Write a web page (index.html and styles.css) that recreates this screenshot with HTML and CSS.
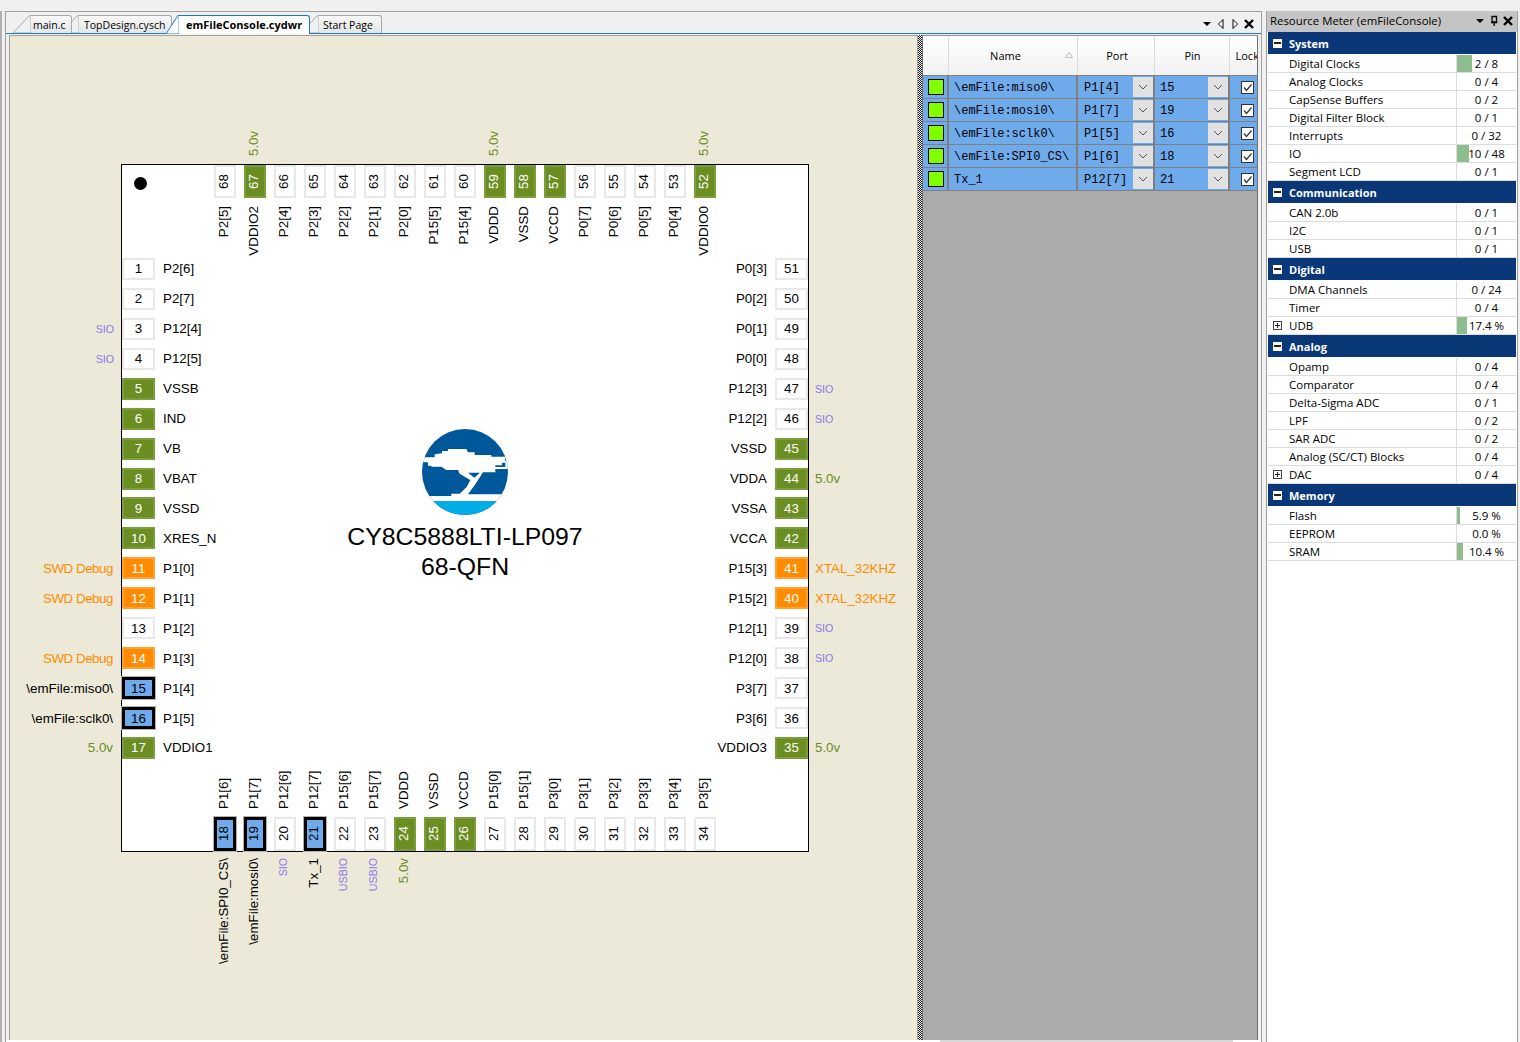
FILE: index.html
```html
<!DOCTYPE html>
<html lang="en">
<head>
    <meta charset="UTF-8">
    <title>emFileConsole.cydwr</title>
    <link rel="stylesheet" href="styles.css">
</head>
<body>
<div class="app">
    <div class="edge"></div>

    <div class="doc">
        <div class="tabbar">
            <div class="tab tab-main"><svg class="slant" viewBox="0 0 18 18" preserveAspectRatio="none"><path d="M0 18 L15 2 Q17 0 18 0 L18 18 Z"/></svg>main.c</div>
            <div class="tab tab-top"><svg class="slant" viewBox="0 0 18 18" preserveAspectRatio="none"><path d="M0 18 L15 2 Q17 0 18 0 L18 18 Z"/></svg>TopDesign.cysch</div>
            <div class="tab tab-active"><svg class="slant" viewBox="0 0 18 18" preserveAspectRatio="none"><path d="M0 18 L15 2 Q17 0 18 0 L18 18 Z"/></svg>emFileConsole.cydwr</div>
            <div class="tab tab-start"><svg class="slant" viewBox="0 0 18 18" preserveAspectRatio="none"><path d="M0 18 L15 2 Q17 0 18 0 L18 18 Z"/></svg>Start Page</div>
            <div class="tab-tools">
                <svg viewBox="0 0 12 12"><path d="M2 4 H10 L6 8 Z"/></svg>
                <svg viewBox="0 0 12 12"><path d="M8 1.5 L3.5 6 L8 10.5 Z" fill="#fff" stroke="#000"/></svg>
                <svg viewBox="0 0 12 12"><path d="M4 1.5 L8.5 6 L4 10.5 Z" fill="#fff" stroke="#000"/></svg>
                <svg viewBox="0 0 12 12"><path d="M2 2 L10 10 M10 2 L2 10" stroke="#000" stroke-width="2.4"/></svg>
            </div>
        </div>

        <div class="doc-body">
            <div class="canvas">
                <div class="chip">
                    <div class="dot"></div>

                    <div class="side-left">
                        <div class="row"><span class="ext"></span><span class="pin">1</span><span>P2[6]</span></div>
                        <div class="row"><span class="ext"></span><span class="pin">2</span><span>P2[7]</span></div>
                        <div class="row"><span class="ext sio">SIO</span><span class="pin">3</span><span>P12[4]</span></div>
                        <div class="row"><span class="ext sio">SIO</span><span class="pin">4</span><span>P12[5]</span></div>
                        <div class="row"><span class="ext"></span><span class="pin power">5</span><span>VSSB</span></div>
                        <div class="row"><span class="ext"></span><span class="pin power">6</span><span>IND</span></div>
                        <div class="row"><span class="ext"></span><span class="pin power">7</span><span>VB</span></div>
                        <div class="row"><span class="ext"></span><span class="pin power">8</span><span>VBAT</span></div>
                        <div class="row"><span class="ext"></span><span class="pin power">9</span><span>VSSD</span></div>
                        <div class="row"><span class="ext"></span><span class="pin power">10</span><span>XRES_N</span></div>
                        <div class="row"><span class="ext debug swd">SWD Debug</span><span class="pin reserved">11</span><span>P1[0]</span></div>
                        <div class="row"><span class="ext debug swd">SWD Debug</span><span class="pin reserved">12</span><span>P1[1]</span></div>
                        <div class="row"><span class="ext"></span><span class="pin">13</span><span>P1[2]</span></div>
                        <div class="row"><span class="ext debug swd">SWD Debug</span><span class="pin reserved">14</span><span>P1[3]</span></div>
                        <div class="row"><span class="ext">\emFile:miso0\</span><span class="pin used">15</span><span>P1[4]</span></div>
                        <div class="row"><span class="ext">\emFile:sclk0\</span><span class="pin used">16</span><span>P1[5]</span></div>
                        <div class="row"><span class="ext volt">5.0v</span><span class="pin power">17</span><span>VDDIO1</span></div>
                    </div>

                    <div class="side-right">
                        <div class="row"><span class="name">P0[3]</span><span class="pin">51</span><span class="ext"></span></div>
                        <div class="row"><span class="name">P0[2]</span><span class="pin">50</span><span class="ext"></span></div>
                        <div class="row"><span class="name">P0[1]</span><span class="pin">49</span><span class="ext"></span></div>
                        <div class="row"><span class="name">P0[0]</span><span class="pin">48</span><span class="ext"></span></div>
                        <div class="row"><span class="name">P12[3]</span><span class="pin">47</span><span class="ext sio">SIO</span></div>
                        <div class="row"><span class="name">P12[2]</span><span class="pin">46</span><span class="ext sio">SIO</span></div>
                        <div class="row"><span class="name">VSSD</span><span class="pin power">45</span><span class="ext"></span></div>
                        <div class="row"><span class="name">VDDA</span><span class="pin power">44</span><span class="ext volt">5.0v</span></div>
                        <div class="row"><span class="name">VSSA</span><span class="pin power">43</span><span class="ext"></span></div>
                        <div class="row"><span class="name">VCCA</span><span class="pin power">42</span><span class="ext"></span></div>
                        <div class="row"><span class="name">P15[3]</span><span class="pin reserved">41</span><span class="ext debug">XTAL_32KHZ</span></div>
                        <div class="row"><span class="name">P15[2]</span><span class="pin reserved">40</span><span class="ext debug">XTAL_32KHZ</span></div>
                        <div class="row"><span class="name">P12[1]</span><span class="pin">39</span><span class="ext sio">SIO</span></div>
                        <div class="row"><span class="name">P12[0]</span><span class="pin">38</span><span class="ext sio">SIO</span></div>
                        <div class="row"><span class="name">P3[7]</span><span class="pin">37</span><span class="ext"></span></div>
                        <div class="row"><span class="name">P3[6]</span><span class="pin">36</span><span class="ext"></span></div>
                        <div class="row"><span class="name">VDDIO3</span><span class="pin power">35</span><span class="ext volt">5.0v</span></div>
                    </div>

                    <div class="side-top">
                        <div class="col"><span class="ext"></span><span class="pin">68</span><span class="name">P2[5]</span></div>
                        <div class="col"><span class="ext volt">5.0v</span><span class="pin power">67</span><span class="name">VDDIO2</span></div>
                        <div class="col"><span class="ext"></span><span class="pin">66</span><span class="name">P2[4]</span></div>
                        <div class="col"><span class="ext"></span><span class="pin">65</span><span class="name">P2[3]</span></div>
                        <div class="col"><span class="ext"></span><span class="pin">64</span><span class="name">P2[2]</span></div>
                        <div class="col"><span class="ext"></span><span class="pin">63</span><span class="name">P2[1]</span></div>
                        <div class="col"><span class="ext"></span><span class="pin">62</span><span class="name">P2[0]</span></div>
                        <div class="col"><span class="ext"></span><span class="pin">61</span><span class="name">P15[5]</span></div>
                        <div class="col"><span class="ext"></span><span class="pin">60</span><span class="name">P15[4]</span></div>
                        <div class="col"><span class="ext volt">5.0v</span><span class="pin power">59</span><span class="name">VDDD</span></div>
                        <div class="col"><span class="ext"></span><span class="pin power">58</span><span class="name">VSSD</span></div>
                        <div class="col"><span class="ext"></span><span class="pin power">57</span><span class="name">VCCD</span></div>
                        <div class="col"><span class="ext"></span><span class="pin">56</span><span class="name">P0[7]</span></div>
                        <div class="col"><span class="ext"></span><span class="pin">55</span><span class="name">P0[6]</span></div>
                        <div class="col"><span class="ext"></span><span class="pin">54</span><span class="name">P0[5]</span></div>
                        <div class="col"><span class="ext"></span><span class="pin">53</span><span class="name">P0[4]</span></div>
                        <div class="col"><span class="ext volt">5.0v</span><span class="pin power">52</span><span class="name">VDDIO0</span></div>
                    </div>

                    <div class="side-bottom">
                        <div class="col"><span class="name">P1[6]</span><span class="pin used">18</span><span class="ext">\emFile:SPI0_CS\</span></div>
                        <div class="col"><span class="name">P1[7]</span><span class="pin used">19</span><span class="ext">\emFile:mosi0\</span></div>
                        <div class="col"><span class="name">P12[6]</span><span class="pin">20</span><span class="ext sio">SIO</span></div>
                        <div class="col"><span class="name">P12[7]</span><span class="pin used">21</span><span class="ext">Tx_1</span></div>
                        <div class="col"><span class="name">P15[6]</span><span class="pin">22</span><span class="ext sio">USBIO</span></div>
                        <div class="col"><span class="name">P15[7]</span><span class="pin">23</span><span class="ext sio">USBIO</span></div>
                        <div class="col"><span class="name">VDDD</span><span class="pin power">24</span><span class="ext volt">5.0v</span></div>
                        <div class="col"><span class="name">VSSD</span><span class="pin power">25</span><span class="ext"></span></div>
                        <div class="col"><span class="name">VCCD</span><span class="pin power">26</span><span class="ext"></span></div>
                        <div class="col"><span class="name">P15[0]</span><span class="pin">27</span><span class="ext"></span></div>
                        <div class="col"><span class="name">P15[1]</span><span class="pin">28</span><span class="ext"></span></div>
                        <div class="col"><span class="name">P3[0]</span><span class="pin">29</span><span class="ext"></span></div>
                        <div class="col"><span class="name">P3[1]</span><span class="pin">30</span><span class="ext"></span></div>
                        <div class="col"><span class="name">P3[2]</span><span class="pin">31</span><span class="ext"></span></div>
                        <div class="col"><span class="name">P3[3]</span><span class="pin">32</span><span class="ext"></span></div>
                        <div class="col"><span class="name">P3[4]</span><span class="pin">33</span><span class="ext"></span></div>
                        <div class="col"><span class="name">P3[5]</span><span class="pin">34</span><span class="ext"></span></div>
                    </div>

                    <div class="chip-center">
                        <svg class="logo" viewBox="12 12 258 258">
                            <defs><clipPath id="disc"><circle cx="141" cy="141" r="129"/></clipPath></defs>
                            <g clip-path="url(#disc)">
                                <rect x="0" y="0" width="282" height="282" fill="#00589a"/>
                                <path fill="#fff" d="M0 97 H50 V88 L72 85 V78 H90 V72 H145 L150 82 H170 V90 H220 V95 H262 V108 H282 V132 H232 V142 H195 L172 178 L150 208 H282 V228 H0 V213 H100 V206 H125 L146 186 L157 165 L125 146 L120 135 H85 L70 125 H40 V122 H30 V112 H0 Z"/>
                                <path fill="#00589a" d="M150 143 H186 L169 158 Z M232 126 H262 V113 H252 V121 H232 Z"/>
                                <rect x="0" y="228" width="282" height="54" fill="#00ade6"/>
                            </g>
                        </svg>
                        <div class="part">CY8C5888LTI-LP097</div>
                        <div class="part">68-QFN</div>
                    </div>
                </div>
            </div>

            <div class="splitter"></div>

            <div class="pins-pane">
                <table class="pin-table">
                    <thead>
                        <tr>
                            <th class="c-swatch"></th>
                            <th class="c-name">Name<svg class="sort" viewBox="0 0 8 6"><path d="M4 0.5 L7.5 5.5 H0.5 Z" fill="#fff" stroke="#bbb"/></svg></th>
                            <th class="c-port">Port</th>
                            <th class="c-pin">Pin</th>
                            <th class="c-lock"><div class="lock-head">Lock</div></th>
                        </tr>
                    </thead>
                    <tbody>
                        <tr>
                            <td><div class="swatch"></div></td>
                            <td>\emFile:miso0\</td>
                            <td class="port"><div class="combo">P1[4]<span class="drop"><svg viewBox="0 0 10 6"><path d="M1 1 L5 5 L9 1" fill="none" stroke="#555"/></svg></span></div></td>
                            <td><div class="combo">15<span class="drop"><svg viewBox="0 0 10 6"><path d="M1 1 L5 5 L9 1" fill="none" stroke="#555"/></svg></span></div></td>
                            <td><svg class="check" viewBox="0 0 13 13"><rect x="0.5" y="0.5" width="12" height="12" fill="#fff" stroke="#333"/><path d="M3 6.5 L5.5 9.5 L10.5 3.5" fill="none" stroke="#333" stroke-width="1.2"/></svg></td>
                        </tr>
                        <tr>
                            <td><div class="swatch"></div></td>
                            <td>\emFile:mosi0\</td>
                            <td class="port"><div class="combo">P1[7]<span class="drop"><svg viewBox="0 0 10 6"><path d="M1 1 L5 5 L9 1" fill="none" stroke="#555"/></svg></span></div></td>
                            <td><div class="combo">19<span class="drop"><svg viewBox="0 0 10 6"><path d="M1 1 L5 5 L9 1" fill="none" stroke="#555"/></svg></span></div></td>
                            <td><svg class="check" viewBox="0 0 13 13"><rect x="0.5" y="0.5" width="12" height="12" fill="#fff" stroke="#333"/><path d="M3 6.5 L5.5 9.5 L10.5 3.5" fill="none" stroke="#333" stroke-width="1.2"/></svg></td>
                        </tr>
                        <tr>
                            <td><div class="swatch"></div></td>
                            <td>\emFile:sclk0\</td>
                            <td class="port"><div class="combo">P1[5]<span class="drop"><svg viewBox="0 0 10 6"><path d="M1 1 L5 5 L9 1" fill="none" stroke="#555"/></svg></span></div></td>
                            <td><div class="combo">16<span class="drop"><svg viewBox="0 0 10 6"><path d="M1 1 L5 5 L9 1" fill="none" stroke="#555"/></svg></span></div></td>
                            <td><svg class="check" viewBox="0 0 13 13"><rect x="0.5" y="0.5" width="12" height="12" fill="#fff" stroke="#333"/><path d="M3 6.5 L5.5 9.5 L10.5 3.5" fill="none" stroke="#333" stroke-width="1.2"/></svg></td>
                        </tr>
                        <tr>
                            <td><div class="swatch"></div></td>
                            <td>\emFile:SPI0_CS\</td>
                            <td class="port"><div class="combo">P1[6]<span class="drop"><svg viewBox="0 0 10 6"><path d="M1 1 L5 5 L9 1" fill="none" stroke="#555"/></svg></span></div></td>
                            <td><div class="combo">18<span class="drop"><svg viewBox="0 0 10 6"><path d="M1 1 L5 5 L9 1" fill="none" stroke="#555"/></svg></span></div></td>
                            <td><svg class="check" viewBox="0 0 13 13"><rect x="0.5" y="0.5" width="12" height="12" fill="#fff" stroke="#333"/><path d="M3 6.5 L5.5 9.5 L10.5 3.5" fill="none" stroke="#333" stroke-width="1.2"/></svg></td>
                        </tr>
                        <tr>
                            <td><div class="swatch"></div></td>
                            <td>Tx_1</td>
                            <td class="port"><div class="combo">P12[7]<span class="drop"><svg viewBox="0 0 10 6"><path d="M1 1 L5 5 L9 1" fill="none" stroke="#555"/></svg></span></div></td>
                            <td><div class="combo">21<span class="drop"><svg viewBox="0 0 10 6"><path d="M1 1 L5 5 L9 1" fill="none" stroke="#555"/></svg></span></div></td>
                            <td><svg class="check" viewBox="0 0 13 13"><rect x="0.5" y="0.5" width="12" height="12" fill="#fff" stroke="#333"/><path d="M3 6.5 L5.5 9.5 L10.5 3.5" fill="none" stroke="#333" stroke-width="1.2"/></svg></td>
                        </tr>
                    </tbody>
                </table>
            </div>
        </div>
        <div class="doc-foot"><div class="hscroll"></div></div>
    </div>

    <div class="meter">
        <div class="meter-title">
            <span>Resource Meter (emFileConsole)</span>
            <div class="meter-tools">
                <svg viewBox="0 0 12 12"><path d="M2 4 H10 L6 8 Z"/></svg>
                <svg viewBox="0 0 12 12"><path d="M4 1.5 H8.5 V7 H4 Z M3 7.5 H9.5 M6.2 8 V11" fill="none" stroke="#000" stroke-width="1.3"/></svg>
                <svg viewBox="0 0 12 12"><path d="M2 2 L10 10 M10 2 L2 10" stroke="#000" stroke-width="2.4"/></svg>
            </div>
        </div>

        <div class="group"><span class="toggle minus"></span>System</div>
        <div class="item"><span class="label">Digital Clocks</span><span class="value"><i class="bar" style="width: 15px"></i><b>2 / 8</b></span></div>
        <div class="item"><span class="label">Analog Clocks</span><span class="value"><b>0 / 4</b></span></div>
        <div class="item"><span class="label">CapSense Buffers</span><span class="value"><b>0 / 2</b></span></div>
        <div class="item"><span class="label">Digital Filter Block</span><span class="value"><b>0 / 1</b></span></div>
        <div class="item"><span class="label">Interrupts</span><span class="value"><b>0 / 32</b></span></div>
        <div class="item"><span class="label">IO</span><span class="value"><i class="bar" style="width: 12px"></i><b>10 / 48</b></span></div>
        <div class="item"><span class="label">Segment LCD</span><span class="value"><b>0 / 1</b></span></div>

        <div class="group"><span class="toggle minus"></span>Communication</div>
        <div class="item"><span class="label">CAN 2.0b</span><span class="value"><b>0 / 1</b></span></div>
        <div class="item"><span class="label">I2C</span><span class="value"><b>0 / 1</b></span></div>
        <div class="item"><span class="label">USB</span><span class="value"><b>0 / 1</b></span></div>

        <div class="group"><span class="toggle minus"></span>Digital</div>
        <div class="item"><span class="label">DMA Channels</span><span class="value"><b>0 / 24</b></span></div>
        <div class="item"><span class="label">Timer</span><span class="value"><b>0 / 4</b></span></div>
        <div class="item"><span class="label"><span class="toggle plus"></span>UDB</span><span class="value"><i class="bar" style="width: 10px"></i><b>17.4 %</b></span></div>

        <div class="group"><span class="toggle minus"></span>Analog</div>
        <div class="item"><span class="label">Opamp</span><span class="value"><b>0 / 4</b></span></div>
        <div class="item"><span class="label">Comparator</span><span class="value"><b>0 / 4</b></span></div>
        <div class="item"><span class="label">Delta-Sigma ADC</span><span class="value"><b>0 / 1</b></span></div>
        <div class="item"><span class="label">LPF</span><span class="value"><b>0 / 2</b></span></div>
        <div class="item"><span class="label">SAR ADC</span><span class="value"><b>0 / 2</b></span></div>
        <div class="item"><span class="label">Analog (SC/CT) Blocks</span><span class="value"><b>0 / 4</b></span></div>
        <div class="item"><span class="label"><span class="toggle plus"></span>DAC</span><span class="value"><b>0 / 4</b></span></div>

        <div class="group"><span class="toggle minus"></span>Memory</div>
        <div class="item"><span class="label">Flash</span><span class="value"><i class="bar" style="width: 3px"></i><b>5.9 %</b></span></div>
        <div class="item"><span class="label">EEPROM</span><span class="value"><b>0.0 %</b></span></div>
        <div class="item"><span class="label">SRAM</span><span class="value"><i class="bar" style="width: 6px"></i><b>10.4 %</b></span></div>
    </div>
</div>
</body>
</html>
```

FILE: styles.css
```css
* {
    box-sizing: border-box;
}
html, body {
    margin: 0;
    height: 100%;
    overflow: hidden;
}
body {
    background-color: #f0f0f0;
    color: #000;
    font-family: "Open Sans", sans-serif;
    font-size: 11px;
}
.app {
    display: flex;
    height: 1042px;
    padding-top: 11px;
}
.edge {
    width: 2px;
    margin-right: 3px;
    background-color: #b0b0b0;
}

/* document window */
.doc {
    display: flex;
    flex-direction: column;
    width: 1257px;
    border: 1px solid #a0a0a0;
    border-bottom: none;
}
.tabbar {
    display: flex;
    align-items: flex-end;
    height: 22px;
    padding: 0 6px 0 24px;
    border-bottom: 1px solid #1a7cc4;
}
.tab {
    position: relative;
    height: 18px;
    line-height: 18px;
    font-size: 10.5px;
    white-space: nowrap;
    border: 1px solid #a8a8a8;
    border-left: none;
    border-bottom: none;
    border-top-right-radius: 3px;
    background: linear-gradient(#f8f8f8, #e6e6e6);
}
.slant {
    position: absolute;
    left: -17px;
    bottom: 0;
    width: 18px;
    height: 18px;
    fill: #f0f0f0;
    stroke: #a8a8a8;
}
.tab-main {
    width: 42px;
    padding-left: 3px;
    z-index: 3;
}
.tab-top {
    width: 94px;
    margin-left: 6px;
    padding-left: 6px;
    z-index: 2;
}
.tab-active {
    width: 132px;
    height: 19px;
    margin-left: 6px;
    margin-bottom: -1px;
    padding-left: 8px;
    font-size: 11px;
    font-weight: 700;
    background: #fff;
    border-color: #1a7cc4;
    z-index: 4;
}
.tab-active .slant {
    left: -12px;
    width: 13px;
    height: 19px;
    fill: #fff;
    stroke: #1a7cc4;
}
.tab-start {
    width: 64px;
    margin-left: 8px;
    padding-left: 5px;
    z-index: 1;
}
.tab-tools {
    display: flex;
    gap: 2px;
    margin-left: auto;
    margin-bottom: 3px;
}
.tab-tools svg, .meter-tools svg {
    width: 12px;
    height: 12px;
}
.doc-body {
    flex: 1;
    display: flex;
    min-height: 0;
    padding: 1px 3px 0;
}
.doc-foot {
    height: 2px;
    padding-left: 934px;
    background-color: #fff;
}
.hscroll {
    width: 293px;
    height: 2px;
    background-color: #d8d8d8;
}

/* chip diagram */
.canvas {
    width: 909px;
    padding: 128px 0 0 111px;
    border: 1px solid #a0a0a0;
    border-bottom: none;
    background-color: #ece9d8;
    font-family: "Liberation Sans", Arial, sans-serif;
    font-size: 13.33px;
}
.chip {
    position: relative;
    display: flex;
    align-items: center;
    justify-content: center;
    width: 688px;
    height: 688px;
    border: 1px solid #000;
    background-color: #fff;
}
.dot {
    position: absolute;
    left: 12px;
    top: 12px;
    width: 13px;
    height: 13px;
    border-radius: 50%;
    background-color: #000;
}
.chip-center {
    display: flex;
    flex-direction: column;
    align-items: center;
    margin-bottom: 5px;
}
.logo {
    width: 86px;
    height: 86px;
    margin-bottom: 7px;
}
.part {
    font-size: 24.8px;
    line-height: 30px;
    white-space: nowrap;
}
.pin {
    display: flex;
    align-items: center;
    justify-content: center;
    flex: none;
    background-color: #fff;
    border: 2px solid #e8e8e8;
}
.pin.power {
    background-color: #6b8e23;
    border-color: #7d9c3c;
    color: #fff;
}
.pin.reserved {
    background-color: #ff8c00;
    border-color: #ffa233;
    color: #fff;
}
.pin.used {
    background-color: #6faaeb;
    border: 3px solid #000;
    box-shadow: 0 0 0 1px #b0b0b0;
}
.ext {
    white-space: nowrap;
}
.sio {
    color: #8a78ee;
    font-size: 10.67px;
}
.debug {
    color: #ff8c00;
}
.swd {
    letter-spacing: -0.45px;
}
.volt {
    color: #6b8e23;
}
.side-left, .side-right {
    position: absolute;
    top: 89px;
    display: flex;
    flex-direction: column;
}
.side-left {
    left: -112px;
}
.side-right {
    left: 503px;
    width: 285px;
}
.row {
    display: flex;
    align-items: center;
    height: 29.94px;
    white-space: nowrap;
}
.row .pin {
    width: 33px;
    height: 22px;
}
.side-left .ext {
    width: 103px;
    margin-right: 9px;
    text-align: right;
}
.side-left .sio {
    width: 104px;
    margin-right: 8px;
}
.side-left .pin {
    margin-right: 8px;
}
.side-right .name {
    flex: 1;
    margin-right: 8px;
    text-align: right;
}
.side-right .ext {
    width: 95px;
    margin-left: 7px;
}
.side-top, .side-bottom {
    position: absolute;
    left: 88px;
    display: flex;
}
.side-top {
    top: -42px;
}
.side-bottom {
    top: 595px;
}
.col {
    display: flex;
    flex-direction: column;
    align-items: center;
    width: 30px;
}
.col .name, .col .ext {
    writing-mode: vertical-rl;
    transform: rotate(180deg) translateX(2px);
    white-space: nowrap;
}
.col .pin {
    writing-mode: vertical-rl;
    transform: rotate(180deg);
    width: 22px;
    height: 33px;
    padding-left: 3px;
}
.side-top .ext {
    height: 33px;
    margin-bottom: 9px;
    text-align: left;
}
.side-top .name {
    margin-top: 8px;
}
.side-bottom .name {
    height: 49px;
    margin-bottom: 8px;
    text-align: left;
}
.side-bottom .pin {
    height: 34px;
    margin-bottom: 7px;
}

/* splitter and pin table */
.splitter {
    width: 4px;
    background: repeating-conic-gradient(#222 0 25%, #eee 0 50%) 0 0 / 2px 2px;
}
.pins-pane {
    width: 336px;
    border: 1px solid #707070;
    border-top-color: #909090;
    border-bottom: none;
    background-color: #ababab;
    overflow: hidden;
}
.pin-table {
    width: 335px;
    table-layout: fixed;
    border-collapse: collapse;
    font-family: "Liberation Mono", "Courier New", monospace;
    font-size: 12px;
}
.c-swatch { width: 25px; }
.c-name { width: 129px; }
.c-port { width: 77px; }
.c-pin { width: 75px; }
.c-lock { width: 29px; }
.pin-table th {
    position: relative;
    height: 39px;
    padding: 0;
    font-family: "Open Sans", sans-serif;
    font-size: 11px;
    font-weight: 400;
    background: linear-gradient(#fff, #f1f1f1);
    border-right: 1px solid #dcdcdc;
    border-bottom: 1px solid #808080;
}
.pin-table th.c-name {
    padding-right: 14px;
}
.pin-table th.c-port {
    padding-left: 3px;
}
.pin-table th.c-pin {
    padding-left: 2px;
}
.sort {
    position: absolute;
    right: 4px;
    top: 16px;
    width: 8px;
    height: 6px;
}
.lock-head {
    width: 23px;
    margin-left: 6px;
    overflow: hidden;
    text-align: left;
    white-space: nowrap;
}
.pin-table td {
    height: 23px;
    padding: 3px 0 0 5px;
    line-height: 19px;
    vertical-align: top;
    background-color: #6faaeb;
    border-right: 2px solid #7f7f7f;
    border-bottom: 1px solid #7f7f7f;
    white-space: nowrap;
    overflow: hidden;
}
.pin-table td.port {
    padding-left: 6px;
}
.swatch {
    width: 16px;
    height: 16px;
    border: 1px solid #000;
    background-color: #7fff00;
}
.combo {
    display: flex;
    align-items: flex-start;
    justify-content: space-between;
    height: 19px;
}
.drop {
    display: flex;
    align-items: center;
    justify-content: center;
    width: 20px;
    height: 20px;
    margin-top: -2px;
    background-color: #e1e1e1;
}
.drop svg {
    width: 10px;
    height: 6px;
}
.check {
    display: block;
    width: 13px;
    height: 13px;
    margin: 2px 0 0 6px;
}

/* resource meter */
.meter {
    width: 252px;
    margin-left: 4px;
    padding: 0 1px;
    border-left: 1px solid #a0a0a0;
    border-right: 1px solid #a0a0a0;
    background-color: #fff;
}
.meter-title {
    display: flex;
    align-items: center;
    justify-content: space-between;
    height: 21px;
    margin: 0 -1px;
    padding: 0 3px 2px;
    font-size: 11.4px;
    background-color: #c4c4c4;
}
.meter-tools {
    display: flex;
    gap: 2px;
    margin-top: 1px;
}
.group {
    display: flex;
    align-items: center;
    height: 23px;
    padding-left: 5px;
    background-color: #0a3778;
    color: #fff;
    font-weight: 700;
    border-bottom: 1px solid #fff;
}
.toggle {
    position: relative;
    width: 9px;
    height: 9px;
    flex: none;
    margin-right: 7px;
    background-color: #fff;
}
.toggle::before {
    content: "";
    position: absolute;
    left: 1px;
    top: 3px;
    width: 7px;
    height: 2px;
    background-color: #222;
}
.plus {
    position: absolute;
    left: 5px;
    top: 4px;
    border: 1px solid #444;
}
.plus::before {
    left: 1px;
    top: 3px;
    width: 5px;
    height: 1px;
}
.plus::after {
    content: "";
    position: absolute;
    left: 3px;
    top: 1px;
    width: 1px;
    height: 5px;
    background-color: #222;
}
.item {
    display: flex;
    height: 18px;
    font-size: 11.5px;
    line-height: 17px;
    border-bottom: 1px solid #dcdcdc;
}
.label {
    position: relative;
    width: 189px;
    padding-left: 21px;
    border-right: 1px solid #dcdcdc;
}
.value {
    position: relative;
    flex: 1;
    text-align: center;
}
.value b {
    position: relative;
    font-weight: 400;
}
.bar {
    position: absolute;
    left: 0;
    top: 0;
    bottom: 0;
    background-color: #8fbc8f;
}
```
